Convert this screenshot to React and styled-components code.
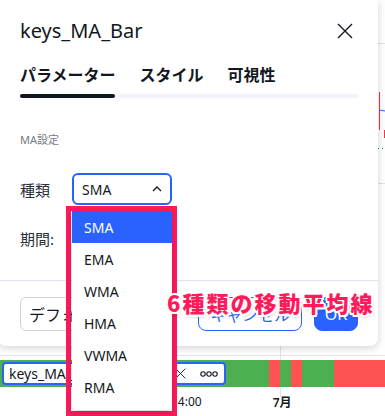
import React, { useState } from "react";
import styled, { createGlobalStyle } from "styled-components";

const GlobalStyle = createGlobalStyle`
  html, body {
    margin: 0;
    padding: 0;
    background: #ffffff;
    overflow: hidden;
  }
  body {
    font-family: "Noto Sans", "Noto Sans CJK JP", sans-serif;
    color: #131722;
  }
`;

const Page = styled.div`
  position: relative;
  width: 385px;
  height: 416px;
  overflow: hidden;
  background: #ffffff;
`;

/* chart behind the dialog */
const Chart = styled.div`
  display: flex;
  flex-direction: column;
  width: 385px;
  height: 416px;
`;

const PriceArea = styled.svg`
  display: block;
  width: 385px;
  height: 360px;
  flex: none;
`;

const Strip = styled.div`
  position: relative;
  display: flex;
  height: 27px;
  flex: none;
`;

const Segment = styled.div`
  height: 100%;
  width: ${(p) => p.$w}px;
  flex: ${(p) => (p.$grow ? 1 : "none")};
  background: ${(p) => (p.$up ? "#4caf50" : "#ff5252")};
`;

const Legend = styled.div`
  position: absolute;
  left: 2px;
  top: 2px;
  width: 224px;
  height: 23px;
  box-sizing: border-box;
  display: flex;
  align-items: center;
  padding: 0 6px 0 5px;
  background: #ffffff;
  border: 2px solid #2962ff;
  border-radius: 4px;
  font-size: 14px;
`;

const LegendName = styled.span`
  flex: 1;
`;

const LegendIcon = styled.span`
  display: flex;
  align-items: center;
  margin-left: ${(p) => p.$gap || 0}px;
`;

const TimeAxis = styled.div`
  display: flex;
  align-items: center;
  height: 29px;
  padding-left: 171px;
  font-size: 12px;
  color: #131722;
  background: linear-gradient(#e0e3eb, #e0e3eb) 280px 0 / 1px 10px no-repeat;
`;

const TimeLabel = styled.span`
  margin-right: ${(p) => p.$mr || 0}px;
  font-weight: ${(p) => (p.$strong ? 600 : 400)};
`;

/* dialog */
const Dialog = styled.div`
  position: absolute;
  left: -2px;
  top: 0;
  width: 380px;
  height: 346px;
  box-sizing: border-box;
  padding-left: 2px;
  background: #ffffff;
  border-radius: 0 0 8px 8px;
  box-shadow: 0 2px 8px rgba(0, 0, 0, 0.18);
  display: flex;
  flex-direction: column;
`;

const Header = styled.div`
  display: flex;
  align-items: center;
  justify-content: space-between;
  padding: 17px 25px 0 20px;
  height: 28px;
`;

const Title = styled.h1`
  margin: 0;
  font-size: 20px;
  font-weight: 400;
  line-height: 28px;
`;

const CloseButton = styled.button`
  display: flex;
  padding: 0;
  border: none;
  background: none;
  cursor: pointer;
`;

const Tabs = styled.div`
  margin: 18px 20px 0;
`;

const TabList = styled.div`
  display: flex;
  gap: 24px;
  padding-bottom: 7px;
`;

const Tab = styled.button`
  padding: 0;
  border: none;
  background: none;
  font-family: inherit;
  font-size: 16px;
  font-weight: 700;
  line-height: 24px;
  color: #131722;
  cursor: pointer;
`;

const Track = styled.div`
  height: 4px;
  border-radius: 2px;
  background: #f0f3fa;
`;

const Indicator = styled.div`
  height: 4px;
  width: ${(p) => p.$w}px;
  border-radius: 2px;
  background: #131722;
`;

const Body = styled.div`
  padding: 34px 20px 26px;
  display: flex;
  flex-direction: column;
`;

const SectionTitle = styled.div`
  font-size: 11px;
  line-height: 16px;
  color: #787b86;
  margin-bottom: 25px;
`;

const Row = styled.div`
  display: flex;
  align-items: center;
  height: 32px;
  margin-bottom: ${(p) => p.$mb || 0}px;
`;

const Label = styled.label`
  width: 52px;
  font-size: 15px;
  color: #2a2e39;
`;

const SelectWrap = styled.div`
  position: relative;
  width: 100px;
`;

const SelectBox = styled.div`
  box-sizing: border-box;
  height: 32px;
  display: flex;
  align-items: center;
  justify-content: space-between;
  padding: 0 8px 0 8px;
  border: 2px solid ${(p) => (p.$open ? "#2962ff" : "#d1d4dc")};
  border-radius: 6px;
  font-size: 14px;
  cursor: pointer;
`;

const Highlight = styled.div`
  position: absolute;
  left: -6px;
  top: 33px;
  width: 101px;
  height: 200px;
  border: 5px solid #ff1a5c;
  z-index: 5;
`;

const Menu = styled.ul`
  list-style: none;
  margin: 0 0 0 1px;
  padding: 0 0 7px;
  width: 100px;
  height: 199px;
  box-sizing: border-box;
  background: #ffffff;
  border-radius: 0 0 4px 4px;
  box-shadow: 0 2px 6px rgba(0, 0, 0, 0.2);
`;

const MenuItem = styled.li`
  height: 32px;
  display: flex;
  align-items: center;
  padding-left: 12px;
  font-size: 14px;
  color: ${(p) => (p.$active ? "#ffffff" : "#131722")};
  background: ${(p) => (p.$active ? "#2962ff" : "transparent")};
  cursor: pointer;
`;

const NumberInput = styled.input`
  box-sizing: border-box;
  width: 100px;
  height: 32px;
  border: 1px solid #d1d4dc;
  border-radius: 6px;
  padding: 0 8px;
  font-size: 14px;
`;

const Footer = styled.div`
  border-top: 1px solid #e0e3eb;
  padding: 16px 20px 0;
  display: flex;
  align-items: center;
`;

const Button = styled.button`
  box-sizing: border-box;
  height: 34px;
  width: ${(p) => p.$w}px;
  margin-left: ${(p) => p.$ml || 0}px;
  border-radius: ${(p) => (p.$primary || p.$outline ? 8 : 6)}px;
  border: 1px solid
    ${(p) => (p.$primary || p.$outline ? "#2962ff" : "#d1d4dc")};
  background: ${(p) => (p.$primary ? "#2962ff" : "#ffffff")};
  color: ${(p) =>
    p.$primary ? "#ffffff" : p.$outline ? "#2962ff" : "#131722"};
  font-family: inherit;
  font-size: 16px;
  text-align: ${(p) => (p.$left ? "left" : "center")};
  padding: 0 ${(p) => (p.$left ? 8 : 0)}px;
  cursor: pointer;
`;

const Spacer = styled.div`
  flex: 1;
`;

const Annotation = styled.div`
  position: absolute;
  left: 167px;
  top: 287px;
  font-family: "Noto Sans CJK JP", sans-serif;
  font-size: 22px;
  font-weight: 900;
  letter-spacing: 2px;
  line-height: 30px;
  color: #ff1a5c;
  z-index: 10;
  white-space: nowrap;
  text-shadow: 2px 0 0 #fff, -2px 0 0 #fff, 0 2px 0 #fff, 0 -2px 0 #fff,
    1.5px 1.5px 0 #fff, -1.5px -1.5px 0 #fff, 1.5px -1.5px 0 #fff,
    -1.5px 1.5px 0 #fff, 1px 2px 3px rgba(0, 0, 0, 0.35);
`;

const MA_TYPES = ["SMA", "EMA", "WMA", "HMA", "VWMA", "RMA"];

const segments = [
  { w: 269, up: true },
  { w: 11, up: false },
  { w: 11, up: true },
  { w: 11, up: false },
  { w: 32, up: true },
  { w: 51, up: false, grow: true },
];

function CloseIcon({ size = 16, stroke = 1.4 }) {
  return (
    <svg width={size} height={size} viewBox="0 0 16 16">
      <path
        d="M1 1L15 15M15 1L1 15"
        stroke="#131722"
        strokeWidth={stroke}
        fill="none"
      />
    </svg>
  );
}

function App() {
  const [maType, setMaType] = useState("SMA");

  return (
    <>
      <GlobalStyle />
      <Page>
        <Chart>
          <PriceArea viewBox="0 0 385 360">
            <line x1="378" y1="43.5" x2="385" y2="43.5" stroke="#e0e3eb" />
            <line x1="378" y1="183.5" x2="385" y2="183.5" stroke="#e0e3eb" />
            <line x1="0" y1="355.5" x2="385" y2="355.5" stroke="#e0e3eb" />
            <line x1="280.5" y1="340" x2="280.5" y2="360" stroke="#e0e3eb" />
            <line x1="379.5" y1="92" x2="379.5" y2="130" stroke="#f23645" />
            <line x1="379" y1="110" x2="385" y2="111" stroke="#2962ff" />
            <line x1="384.5" y1="130" x2="384.5" y2="138" stroke="#f23645" />
            <line
              x1="378"
              y1="148.5"
              x2="385"
              y2="148.5"
              stroke="#089981"
              strokeDasharray="1 3"
            />
          </PriceArea>
          <Strip>
            {segments.map((s, i) => (
              <Segment key={i} $w={s.w} $up={s.up} $grow={s.grow} />
            ))}
            <Legend>
              <LegendName>keys_MA_Bar</LegendName>
              <LegendIcon>
                <CloseIcon size={11} stroke={1.3} />
              </LegendIcon>
              <LegendIcon $gap={14}>
                <svg width="18" height="6" viewBox="0 0 18 6">
                  {[3, 9, 15].map((cx) => (
                    <circle
                      key={cx}
                      cx={cx}
                      cy="3"
                      r="2.2"
                      fill="none"
                      stroke="#131722"
                      strokeWidth="1.1"
                    />
                  ))}
                </svg>
              </LegendIcon>
            </Legend>
          </Strip>
          <TimeAxis>
            <TimeLabel $mr={71}>14:00</TimeLabel>
            <TimeLabel $strong>7月</TimeLabel>
          </TimeAxis>
        </Chart>

        <Dialog>
          <Header>
            <Title>keys_MA_Bar</Title>
            <CloseButton>
              <CloseIcon />
            </CloseButton>
          </Header>

          <Tabs>
            <TabList>
              <Tab>パラメーター</Tab>
              <Tab>スタイル</Tab>
              <Tab>可視性</Tab>
            </TabList>
            <Track>
              <Indicator $w={95} />
            </Track>
          </Tabs>

          <Body>
            <SectionTitle>MA設定</SectionTitle>
            <Row $mb={17}>
              <Label>種類</Label>
              <SelectWrap>
                <SelectBox $open>
                  <span>{maType}</span>
                  <svg width="10" height="6" viewBox="0 0 10 6">
                    <path
                      d="M1 5L5 1L9 5"
                      stroke="#131722"
                      strokeWidth="1.3"
                      fill="none"
                    />
                  </svg>
                </SelectBox>
                <Highlight>
                  <Menu>
                    {MA_TYPES.map((t) => (
                      <MenuItem
                        key={t}
                        $active={t === maType}
                        onClick={() => setMaType(t)}
                      >
                        {t}
                      </MenuItem>
                    ))}
                  </Menu>
                </Highlight>
              </SelectWrap>
            </Row>
            <Row>
              <Label>期間:</Label>
              <NumberInput defaultValue="20" />
            </Row>
          </Body>

          <Footer>
            <Button $w={130} $left>
              デフォルト
            </Button>
            <Spacer />
            <Button $w={104} $outline>
              キャンセル
            </Button>
            <Button $w={44} $ml={12} $primary>
              OK
            </Button>
          </Footer>
        </Dialog>

        <Annotation>6種類の移動平均線</Annotation>
      </Page>
    </>
  );
}

export default App;
